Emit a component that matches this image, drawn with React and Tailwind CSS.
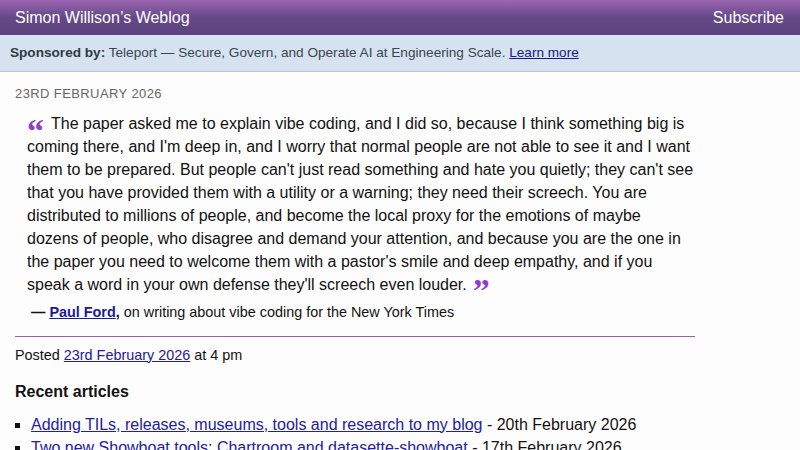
const recent = [
  { title: 'Adding TILs, releases, museums, tools and research to my blog', date: '20th February 2026' },
  { title: 'Two new Showboat tools: Chartroom and datasette-showboat', date: '17th February 2026' },
];

export default function App() {
  return (
    <div className="min-h-[450px] bg-[#fefdfe] text-[#111] font-['Liberation_Sans',Arial,sans-serif]">
      <header className="flex h-[35px] items-center justify-between bg-gradient-to-b from-[#9c66b0] via-[#654888] to-[#5e4380] px-[15px] text-white">
        <span className="text-[16px]">Simon Willison’s Weblog</span>
        <span className="pr-[1px] text-[16px]">Subscribe</span>
      </header>

      <div className="flex h-[37px] items-center border-b border-[#b9c6d6] bg-[#d6e2ef] px-[10px] text-[13.6px] text-[#3b4550]">
        <p>
          <strong className="text-[#2f3a45]">Sponsored by:</strong> Teleport — Secure, Govern, and Operate AI at Engineering Scale.{' '}
          <a href="#" className="text-[#1a1a80] underline">Learn more</a>
        </p>
      </div>

      <main className="ml-[15px] w-[680px]">
        <p className="mt-[12px] text-[13px] uppercase tracking-[0.4px] text-[#666]">23rd February 2026</p>

        <blockquote className="ml-[12px] mt-[8px] text-[16px] leading-[23px] text-[#111]">
          <span className="mr-[7px] inline-block font-['Liberation_Serif',serif] text-[34px] font-bold leading-[0] text-[#8b3fd1] align-[-13px]">“</span>
          The paper asked me to explain vibe coding, and I did so, because I think something big is coming there, and I'm deep in, and I worry that normal people are not able to see it and I want them to be prepared. But people can't just read something and hate you quietly; they can't see that you have provided them with a utility or a warning; they need their screech. You are distributed to millions of people, and become the local proxy for the emotions of maybe dozens of people, who disagree and demand your attention, and because you are the one in the paper you need to welcome them with a pastor's smile and deep empathy, and if you speak a word in your own defense they'll screech even louder.
          <span className="ml-[6px] inline-block font-['Liberation_Serif',serif] text-[34px] font-bold leading-[0] text-[#8b3fd1] align-[-12px]">”</span>
        </blockquote>

        <p className="ml-[16px] mt-[6px] text-[14.4px] leading-[20px]">
          <strong>
            — <a href="#" className="text-[#1a1a99] underline">Paul Ford</a>,
          </strong>{' '}
          on writing about vibe coding for the New York Times
        </p>

        <hr className="mt-[14px] border-0 border-t border-[#9c5fae]" />

        <p className="mt-[8px] text-[14.4px] leading-[20px]">
          Posted <a href="#" className="text-[#2020a0] underline">23rd February 2026</a> at 4 pm
        </p>

        <h2 className="mt-[17px] text-[16px] font-bold leading-[20px]">Recent articles</h2>

        <ul className="mt-[11px] list-[square] pl-[16px] text-[16px] leading-[23px]">
          {recent.map(({ title, date }) => (
            <li key={title}>
              <a href="#" className="text-[#2020a0] underline">{title}</a> - {date}
            </li>
          ))}
        </ul>
      </main>
    </div>
  );
}
